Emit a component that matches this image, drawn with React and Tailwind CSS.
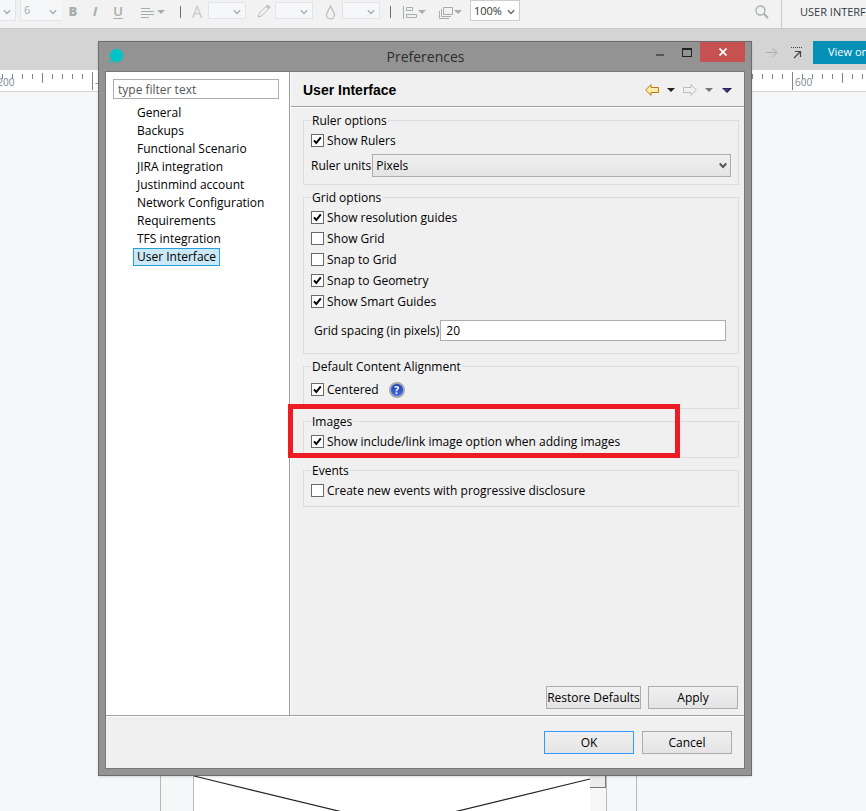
import { useId } from 'react';

const NAV_ITEMS = [
  'General',
  'Backups',
  'Functional Scenario',
  'JIRA integration',
  'Justinmind account',
  'Network Configuration',
  'Requirements',
  'TFS integration',
  'User Interface',
];

const GRID_OPTIONS = [
  { label: 'Show resolution guides', checked: true },
  { label: 'Show Grid', checked: false },
  { label: 'Snap to Grid', checked: false },
  { label: 'Snap to Geometry', checked: true },
  { label: 'Show Smart Guides', checked: true },
];

const TICKS = Array.from({ length: 200 }, (_, i) => i);

function Caret({ className = '' }) {
  return (
    <svg className={`h-1 w-2 shrink-0 ${className}`} viewBox="0 0 8 4" fill="currentColor">
      <path d="M0 0h8L4 4z" />
    </svg>
  );
}

function ToolSelect({
  label,
  value = '',
  className = '',
  boxClass = 'h-[17px] border-[#e1e4eb] bg-[#f5f7f9]',
  chevronClass = 'top-[6px] text-[#a5adad]',
}) {
  return (
    <div className={`relative shrink-0 ${className}`}>
      <select aria-label={label} defaultValue={value} className={`block w-full appearance-none border pl-[3px] text-[11px] leading-4 ${boxClass}`}>
        <option value={value}>{value}</option>
      </select>
      <svg
        className={`pointer-events-none absolute right-[5px] h-2 w-2 ${chevronClass}`}
        viewBox="0 0 8 8"
        fill="none"
        stroke="currentColor"
        strokeWidth="1.3"
      >
        <path d="M.8 2.2 4 5.5l3.2-3.3" />
      </svg>
    </div>
  );
}

function ToolButton({ label, className = '', children }) {
  return (
    <button type="button" aria-label={label} className={`flex h-5 shrink-0 items-center justify-center ${className}`}>
      {children}
    </button>
  );
}

function Toolbar() {
  return (
    <header className="flex h-[29px] items-start overflow-hidden whitespace-nowrap border-b border-[#c9c9c9] bg-[#f2f2f2] text-[#a5adad]">
      <ToolSelect
        label="Font"
        className="w-4"
        boxClass="h-[21px] border-l-0 border-t-0 border-[#e1e4eb] bg-[#f5f7f9]"
        chevronClass="top-2 text-[#a5adad]"
      />
      <ToolSelect
        label="Font size"
        value="6"
        className="ml-1 w-[42px]"
        boxClass="h-[21px] border-r-0 border-t-0 border-[#e1e4eb] bg-[#f5f7f9]"
        chevronClass="top-2 text-[#a5adad]"
      />
      <ToolButton label="Bold" className="ml-[5px] mt-[2px] w-3 text-[13px] font-extrabold">B</ToolButton>
      <ToolButton label="Italic" className="ml-3 mt-[2px] w-2 text-[13px] font-bold italic">I</ToolButton>
      <ToolButton label="Underline" className="ml-[13px] mt-[2px] w-3 text-[13px] font-semibold underline underline-offset-2">U</ToolButton>
      <ToolButton label="Align text" className="ml-[17px] mt-[2px] gap-[3px]">
        <svg className="h-[11px] w-[13px]" viewBox="0 0 13 11" stroke="currentColor">
          <path d="M0 1.5h9M0 4.5h13M0 7.5h13M0 10.5h8" />
        </svg>
        <Caret />
      </ToolButton>
      <span className="ml-[15px] mt-[6px] h-3 w-px shrink-0 bg-[#6a7070]" />
      <ToolButton label="Text color" className="ml-[10px] mt-[2px] w-3 text-[16px] text-[#c6c9c9]">A</ToolButton>
      <ToolSelect label="Text color value" className="ml-[5px] mt-[2px] w-[38px]" />
      <ToolButton label="Line color" className="ml-[11px] mt-[1px] w-[14px] text-[#b8bdbd]">
        <svg className="h-[14px] w-[14px]" viewBox="0 0 14 14" fill="none" stroke="currentColor">
          <path d="M1 13l1.2-3.8L9 2.5l2.5 2.5-6.8 6.8z" />
          <path d="M9.5 2l1-1L13 3.5l-1 1z" fill="currentColor" />
        </svg>
      </ToolButton>
      <ToolSelect label="Line color value" className="ml-1 mt-[2px] w-[38px]" />
      <ToolButton label="Fill color" className="ml-3 mt-[2px] w-[11px] text-[#b8bdbd]">
        <svg className="h-[15px] w-[11px]" viewBox="0 0 11 15" fill="none" stroke="currentColor" strokeWidth="1.2">
          <path d="M5.5 1C4.5 4 1.500 7 1.500 10a4 4 0 0 0 8 0C9.500 7 6.500 4 5.500 1z" />
        </svg>
      </ToolButton>
      <ToolSelect label="Fill color value" className="ml-[6px] mt-[2px] w-[38px]" />
      <span className="ml-[10px] mt-[6px] h-3 w-px shrink-0 bg-[#6a7070]" />
      <ToolButton label="Align items" className="ml-3 mt-[2px] gap-px">
        <svg className="h-[13px] w-[14px]" viewBox="0 0 14 13" fill="none" stroke="currentColor">
          <path d="M.5 0v13M3.500 1.500h6v3h-6zM3.500 8.500h10v3h-10z" />
        </svg>
        <Caret />
      </ToolButton>
      <ToolButton label="Order items" className="ml-[13px] mt-[2px] gap-px">
        <svg className="h-[13px] w-[14px]" viewBox="0 0 14 13" fill="none" stroke="currentColor">
          <path d="M4.500 1.500h9v7h-9zM2.500 3v7.500H12M.5 5v7.500H10" />
        </svg>
        <Caret />
      </ToolButton>
      <ToolSelect
        label="Zoom"
        value="100%"
        className="ml-2 w-[50px]"
        boxClass="h-[21px] border-[#c9cdd4] bg-white text-[#333]"
        chevronClass="top-2 text-[#666]"
      />
      <ToolButton label="Search" className="ml-auto mt-[2px] w-[14px]">
        <svg className="h-[14px] w-[14px]" viewBox="0 0 14 14" fill="none" stroke="currentColor" strokeWidth="1.3">
          <circle cx="5.5" cy="5.5" r="4.5" />
          <path d="M9 9l4 4" strokeWidth="1.8" />
        </svg>
      </ToolButton>
      <div className="ml-3 h-7 w-[85px] shrink-0 overflow-hidden border-l border-[#c9c9c9] pl-[18px] text-[11px] leading-6 text-[#333a45]">
        USER INTERFACE
      </div>
    </header>
  );
}

function ActionBar() {
  return (
    <div className="flex h-[41px] items-start justify-end overflow-hidden bg-[#d4d4d4] pt-3">
      <svg className="mr-[13px] mt-[6px] h-[11px] w-3" viewBox="0 0 12 11" fill="none" stroke="#a5b0b0">
        <path d="M0 5.500h11M6.500 1l4.500 4.500L6.500 10" />
      </svg>
      <svg className="mr-[10px] mt-[6px] h-3 w-3" viewBox="0 0 12 12" fill="none" stroke="#444">
        <path d="M0 .5h12" strokeDasharray="1 1" />
        <path d="M3 11l6-6M4 4.500h5.500V10" strokeWidth="1.2" />
      </svg>
      <button type="button" className="h-[23px] w-[53px] overflow-hidden whitespace-nowrap bg-[#0591b7] pl-[15px] text-left text-[11px] text-white">
        View on device
      </button>
    </div>
  );
}

function Ruler() {
  return (
    <svg className="block h-[22px] w-full border-b border-[#d3d5d8] bg-white" fill="#7b8590">
      {TICKS.map((i) => {
        const major = i % 10 === 9;
        const medium = i % 10 === 4;
        return (
          <rect key={i} x={i * 10 + 2} y={major ? 2 : medium ? 3 : 4} width="1" height={major ? 18 : medium ? 10 : 5} />
        );
      })}
      <text x="-6" y="16" fontSize="10">-200</text>
      <text x="95" y="16" fontSize="10">-100</text>
      <text x="795" y="16" fontSize="10">600</text>
    </svg>
  );
}

function Canvas() {
  return (
    <main className="flex flex-1 items-end bg-[#f5f7f9]">
      <div className="ml-[160px] mr-[229px] flex h-24 flex-1 border-x border-[#b8b8b8] pl-8 pr-[29px]">
        <div className="flex flex-1 border-x border-[#b8b8b8] bg-white">
          <svg className="h-24 min-w-0 flex-1" viewBox="0 0 396 96" preserveAspectRatio="none" stroke="#222" strokeWidth="1.2">
            <path d="M0 61 198 109M396 64 198 112" />
          </svg>
          <div className="w-4 bg-[#f7f7f7]">
            <div className="h-[73px] border-b border-r border-[#777] bg-[#ececec]" />
          </div>
        </div>
      </div>
    </main>
  );
}

function Checkbox({ label, checked }) {
  return (
    <label className="flex h-[21px] items-center gap-[3px]">
      <span className="grid">
        <input
          type="checkbox"
          defaultChecked={checked}
          className="peer col-start-1 row-start-1 h-[13px] w-[13px] appearance-none border border-[#6a6a6a] bg-white"
        />
        <svg
          className="pointer-events-none invisible col-start-1 row-start-1 h-[13px] w-[13px] peer-checked:visible"
          viewBox="0 0 13 13"
          fill="none"
          stroke="#000"
          strokeWidth="2"
        >
          <path d="M3 6.3 5.3 9 9.8 3.3" />
        </svg>
      </span>
      {label}
    </label>
  );
}

function Group({ title, className = '', children }) {
  return (
    <fieldset className={`min-w-0 border border-[#dcdcdc] px-[7px] ${className}`}>
      <legend className="h-[17px] px-px leading-[17px]">{title}</legend>
      {children}
    </fieldset>
  );
}

function PushButton({ className = '', children }) {
  return (
    <button type="button" className={`h-[23px] whitespace-nowrap border bg-linear-to-b from-[#f0f0f0] to-[#e4e4e4] leading-5 ${className}`}>
      {children}
    </button>
  );
}

function TitleBar() {
  return (
    <div className="flex h-[29px] items-start pl-[10px]">
      <svg className="mt-[6px] h-4 w-4" viewBox="0 0 16 16" fill="#00c2c7">
        <circle cx="7.5" cy="7.5" r="6.8" />
        <circle cx="1.2" cy="13.5" r="1.2" />
      </svg>
      <h1 className="flex-1 pl-[70px] text-center text-[14px] leading-[29px] text-[#2d2d2d]">Preferences</h1>
      <button type="button" aria-label="Minimize" className="mt-3 h-[2px] w-2 bg-[#555]" />
      <button type="button" aria-label="Maximize" className="ml-[18px] mt-[6px] h-[9px] w-[10px] border border-t-2 border-[#222]" />
      <button type="button" aria-label="Close" className="ml-2 mr-[6px] flex h-5 w-[45px] items-center justify-center bg-[#c75050]">
        <svg className="h-2 w-2" viewBox="0 0 8 8" stroke="#fff" strokeWidth="1.7">
          <path d="M.5.5l7 7M7.500.5l-7 7" />
        </svg>
      </button>
    </div>
  );
}

function Sidebar() {
  return (
    <nav className="w-[184px] shrink-0 border-r border-[#9a9a9a] bg-white px-[7px] pt-[7px]">
      <input
        type="text"
        aria-label="Filter"
        placeholder="type filter text"
        className="block h-5 w-[166px] border border-[#abadb3] px-1 placeholder:text-[#555]"
      />
      <ul className="mt-[5px] pl-5">
        {NAV_ITEMS.map((item) => (
          <li key={item} className="h-[18px]">
            <a
              href="#"
              className={`inline-block h-[18px] whitespace-nowrap border px-[3px] leading-4 ${
                item === 'User Interface' ? 'border-[#26a0da] bg-[#cbe8f6]' : 'border-transparent'
              }`}
            >
              {item}
            </a>
          </li>
        ))}
      </ul>
    </nav>
  );
}

function PageHeader() {
  return (
    <div className="flex h-[35px] items-center border-b border-[#a0a0a0] pl-3 pr-3 pt-[2px]">
      <h2 className="mr-auto font-['Liberation_Sans',sans-serif] text-[14px] font-bold">User Interface</h2>
      <button type="button" aria-label="Back">
        <svg className="h-3 w-[14px]" viewBox="0 0 14 12" fill="#fbe9a6" stroke="#b87a14" strokeLinejoin="round">
          <path d="M.6 6 6 .6v2.900h7.500v5H6v2.900z" />
        </svg>
      </button>
      <button type="button" aria-label="Back history" className="ml-2 text-[#222]">
        <Caret />
      </button>
      <button type="button" aria-label="Forward" className="ml-2">
        <svg className="h-3 w-[14px]" viewBox="0 0 14 12" fill="#f1f1ee" stroke="#bbb" strokeLinejoin="round">
          <path d="M13.400 6 8 .6v2.900H.5v5H8v2.900z" />
        </svg>
      </button>
      <button type="button" aria-label="Forward history" className="ml-2 text-[#777]">
        <Caret />
      </button>
      <button type="button" aria-label="View menu" className="ml-[9px]">
        <svg className="h-[5px] w-[10px]" viewBox="0 0 10 5">
          <path d="M0 0h10L5 5z" fill="#16161e" />
          <path d="M1 .5h7L4.500 4z" fill="#43389a" />
        </svg>
      </button>
    </div>
  );
}

function HelpIcon() {
  return (
    <button type="button" aria-label="Help" className="flex h-4 w-4 items-center justify-center rounded-full border-2 border-[#a3a7b3] bg-linear-to-b from-[#1f3fae] to-[#3f6ee8] text-[10px] font-bold leading-3 text-white">
      ?
    </button>
  );
}

function Preferences() {
  const unitsId = useId();
  const spacingId = useId();

  return (
    <section
      role="dialog"
      aria-label="Preferences"
      className="absolute bottom-[35px] left-[98px] right-[114px] top-[41px] flex flex-col border border-[#6c6c6c] bg-[#939393] text-[12px] text-black shadow-sm"
    >
      <TitleBar />
      <div className="mx-[6px] mb-[6px] flex flex-1 flex-col border border-[#787878] bg-[#f0f0f0]">
        <div className="flex flex-1 border-b border-[#a0a0a0]">
          <Sidebar />
          <div className="flex min-w-0 flex-1 flex-col border-l border-white">
            <PageHeader />
            <div className="flex flex-1 flex-col gap-1 border-t border-white pl-3 pr-[5px] pt-1">
              <Group title="Ruler options" className="pb-[7px] pt-px">
                <Checkbox label="Show Rulers" checked />
                <div className="mt-[3px] flex items-center gap-px">
                  <label htmlFor={unitsId}>Ruler units</label>
                  <div className="relative flex-1">
                    <select id={unitsId} className="block h-[23px] w-full appearance-none border border-[#acacac] bg-linear-to-b from-[#f0f0f0] to-[#e4e4e4] pl-[3px]">
                      <option>Pixels</option>
                    </select>
                    <svg className="pointer-events-none absolute right-1 top-2 h-2 w-2" viewBox="0 0 8 8" fill="none" stroke="#555" strokeWidth="2">
                      <path d="M.7 1.500 4 5l3.300-3.500" />
                    </svg>
                  </div>
                </div>
              </Group>

              <Group title="Grid options" className="pb-3 pt-px">
                {GRID_OPTIONS.map((option) => (
                  <Checkbox key={option.label} {...option} />
                ))}
                <div className="mt-2 flex items-center gap-px pl-[3px] pr-[5px]">
                  <label htmlFor={spacingId}>Grid spacing (in pixels)</label>
                  <input id={spacingId} type="text" defaultValue="20" className="h-[21px] min-w-0 flex-1 border border-[#abadb3] bg-white px-[5px]" />
                </div>
              </Group>

              <Group title="Default Content Alignment" className="pb-2 pt-1">
                <div className="flex items-center gap-[10px]">
                  <Checkbox label="Centered" checked />
                  <HelpIcon />
                </div>
              </Group>

              <div className="relative">
                <Group title="Images" className="pb-[5px] pt-px">
                  <Checkbox label="Show include/link image option when adding images" checked />
                </Group>
                {/* highlight frame */}
                <div className="pointer-events-none absolute -left-[15px] -top-[9px] bottom-0 right-[59px] border-[5px] border-[#ed1c24]" />
              </div>

              <Group title="Events" className="pb-[5px] pt-px">
                <Checkbox label="Create new events with progressive disclosure" />
              </Group>

              <div className="mb-[6px] mt-auto flex justify-end gap-[7px] pr-px">
                <PushButton className="w-[95px] border-[#acacac]">Restore Defaults</PushButton>
                <PushButton className="w-[90px] border-[#acacac]">Apply</PushButton>
              </div>
            </div>
          </div>
        </div>
        <footer className="flex justify-end gap-2 border-t border-white pb-[14px] pr-3 pt-[14px]">
          <PushButton className="w-[90px] border-[#3399ff]">OK</PushButton>
          <PushButton className="w-[90px] border-[#acacac]">Cancel</PushButton>
        </footer>
      </div>
    </section>
  );
}

export default function App() {
  return (
    <div className="relative flex min-h-screen flex-col overflow-hidden font-['Open_Sans','Noto_Sans',sans-serif]">
      <Toolbar />
      <ActionBar />
      <Ruler />
      <Canvas />
      <Preferences />
    </div>
  );
}
